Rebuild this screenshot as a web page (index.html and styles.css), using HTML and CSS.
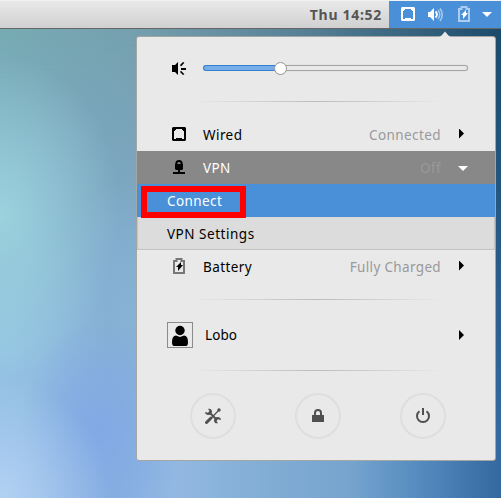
FILE: index.html
```html
<!DOCTYPE html>
<html lang="en">
<head>
<meta charset="utf-8">
<title>System menu</title>
<link rel="stylesheet" href="styles.css">
</head>
<body>
<div class="desktop">
  <header class="topbar">
    <span class="clock">Thu 14:52</span>
    <div class="status">
      <svg class="s-net" width="14" height="14" viewBox="0 0 14 14"><path fill="#fff" fill-rule="evenodd" d="M1 0h12l1 1v12l-1 1H1l-1-1V1zM2 12h10V4h-1V3h-1V2H4v1H3v1H2zM4 11h6v1H4z"/></svg>
      <svg class="s-vol" width="16" height="14" viewBox="0 0 16 14"><path fill="#fff" d="M0 4h2l4-4v13L2 9H0z"/><path d="M7.500 3.500q3 3 0 6" stroke="#fff" stroke-width="1.800" fill="none"/><path d="M10 2q3.500 4.500 0 9M12 .5q4.500 6 0 12.500" stroke="#fff" stroke-opacity=".5" stroke-width="1.600" fill="none"/></svg>
      <svg class="s-bat" width="12" height="16" viewBox="0 0 12 16"><path d="M1 15V3h2.500V1h5v2H11v12z" fill="none" stroke="#fff" stroke-opacity=".55" stroke-width="2"/><path fill="#fff" d="M8 4v3h2l-5 6V9H3z"/></svg>
      <svg class="s-arr" width="10" height="5" viewBox="0 0 10 5"><path fill="#fff" d="M0 0h10L5 5z"/></svg>
    </div>
  </header>
  <main class="menu">
    <svg class="pointer" width="12" height="6" viewBox="0 0 12 6"><path d="M0 6Q2 5.500 6 .5Q10 5.500 12 6z" fill="#e9e9e9"/></svg>
    <div class="volume">
      <svg width="14" height="15" viewBox="0 0 14 15"><path d="M0 4h3l3-3v13l-3-3H0zM9 7h5v2H9zM8 4l3-3 1.400.8L9 5.400zM8 11l3 3 1.400-.8L9 9.800z"/></svg>
      <div class="slider"><div class="fill"></div><div class="knob"></div><div class="rest"></div></div>
    </div>
    <div class="sep"></div>
    <div class="row wired">
      <svg class="icon" width="14" height="14" viewBox="0 0 14 14"><path fill-rule="evenodd" d="M1 0h12l1 1v12l-1 1H1l-1-1V1zM2 12h10V4h-1V3h-1V2H4v1H3v1H2zM4 11h6v1H4z"/></svg>
      <span class="name">Wired</span><span class="state connected">Connected</span><i class="arrow"></i>
    </div>
    <div class="row vpn">
      <svg class="icon" width="14" height="14" viewBox="0 0 14 14"><path fill-rule="evenodd" d="M3 4h.3Q3.300 0 7 0t3.700 4H11v5l-1 1H8v2h5v2H1v-2h5v-2H4L3 9zM5.300 4h3.400Q8.700 2 7 2T5.300 4z"/></svg>
      <span class="name">VPN</span><span class="state off">Off</span><i class="arrow down"></i>
    </div>
    <div class="sub connect"><span>Connect</span><div class="mark"></div></div>
    <div class="sub settings"><span>VPN Settings</span></div>
    <div class="row battery">
      <svg class="icon" width="14" height="16" viewBox="0 0 14 16"><path d="M2 15V3h2.500V1h5v2H12v12z" fill="none" stroke="#777" stroke-width="2"/><path d="M9 4v3h2l-5 6V9H4z"/></svg>
      <span class="name">Battery</span><span class="state charged">Fully Charged</span><i class="arrow"></i>
    </div>
    <div class="sep second"></div>
    <div class="user">
      <div class="avatar"><svg width="24" height="24" viewBox="0 0 24 24"><circle cx="12" cy="7.500" r="4.700"/><path d="M4 19q0-6.500 4-6.500l4 1.500 4-1.500q4 0 4 6.500 0 4-2 4H6q-2 0-2-4"/></svg></div>
      <span class="name">Lobo</span><i class="arrow"></i>
    </div>
    <div class="sep third"></div>
    <div class="actions">
      <div class="round"><svg width="16" height="16" viewBox="0 0 16 16"><path d="M2 14.500 14 2" stroke="#4f4f4f" stroke-width="1.200"/><path d="M1.500 14.500 6 10" stroke="#4f4f4f" stroke-width="3" stroke-linecap="round"/><circle cx="14" cy="2" r="1.700" fill="#4f4f4f"/><path d="M5 5l6 6" stroke="#4f4f4f" stroke-width="2"/><path d="M3 .8q3.500-.8 4 2.700-.3 3.500-3.500 3.500T0 4l3 .8L4.500 3zM13 15.200q-3.500.8-4-2.700.3-3.500 3.500-3.500t3.500 3l-3-.8-1.500 1.800z" fill="#4f4f4f"/></svg></div>
      <div class="round"><svg width="16" height="16" viewBox="0 0 16 16"><path fill="#4f4f4f" fill-rule="evenodd" d="M2 7h2V5q0-4 4-4t4 4v2h2v7H2zM6 7h4V5q0-2-2-2T6 5z"/></svg></div>
      <div class="round"><svg width="16" height="16" viewBox="0 0 16 16"><path d="M4.500 3.200a6 6 0 1 0 7 0" fill="none" stroke="#4f4f4f" stroke-width="2"/><path d="M8 0v7" stroke="#4f4f4f" stroke-width="2"/></svg></div>
    </div>
  </main>
</div>
</body>
</html>
```
FILE: styles.css
```css
* { box-sizing: border-box; }
body { margin: 0; background: #fff; font: 13.5px "Noto Sans", "Open Sans", sans-serif; color: #000; }
svg { display: block; flex: none; }
.desktop {
  position: relative; isolation: isolate;
  width: 501px; height: 498px; overflow: hidden;
  background:
    linear-gradient(to right, #93b9e8 0, #88b0e1 110px, #92b8e2 180px, #84afd6 250px, #76a4ce 350px, #548bbf 420px, #3468a0 501px);
}
.desktop::before, .desktop::after { content: ""; position: absolute; inset: 0; z-index: -1; }
.desktop::before {
  background: linear-gradient(to right, #76abb3 0, #75a0ae 130px, #588196 300px, #1b4b6b 500px);
  mask-image: linear-gradient(to bottom, #000 30px, #0009 200px, transparent 440px);
}
.desktop::after {
  background:
    radial-gradient(ellipse 110px 120px at 0 498px, #b2d2f2, #b2d2f200),
    radial-gradient(ellipse 80px 110px at 100px 430px, #82a9e4, #82a9e400),
    radial-gradient(ellipse 120px 160px at 0 215px, #9bd2dd, #9bd2dd00),
    radial-gradient(ellipse 110px 140px at 0 340px, #98cae5cc, #98cae500),
    radial-gradient(ellipse 90px 130px at 130px 310px, #88b4d6cc, #88b4d600);
}
.topbar {
  height: 29px; display: flex; justify-content: flex-end;
  background: linear-gradient(#e9e9e9, #d0d0d0);
  border-top: 1px solid #f1f1f1; border-bottom: 1px solid #666;
}
.clock { font-size: 14px; font-weight: 700; color: #555; line-height: 28px; margin-right: 7px; letter-spacing: .7px; }
.status { width: 112px; background: #4a90d9; display: flex; padding-left: 12px; }
.s-net { margin-top: 6px; }
.s-vol { margin: 7px 0 0 13px; }
.s-bat { margin: 5px 0 0 14px; }
.s-arr { margin: 11px 0 0 12px; }
.menu {
  position: relative; width: 360px; height: 425px; margin: 7px 0 0 136px;
  border: 1px solid #a5a5a2; border-radius: 3px; background: #e9e9e9;
  letter-spacing: .42px;
}
.pointer { position: absolute; left: 302px; top: -6px; }
.volume { height: 64px; display: flex; align-items: center; padding: 0 27px 2px 35px; }
.slider { display: flex; align-items: center; width: 266px; margin-left: 17px; }
.fill { width: 72px; height: 6px; background: #77aeea; border: 1px solid #3580d1; border-right: 0; border-radius: 3px 0 0 3px; }
.knob { width: 13px; height: 13px; margin: 0 -1px; border: 1px solid #929292; border-radius: 50%; background: #fff; z-index: 1; }
.rest { flex: 1; height: 6px; border: 1px solid #a4a4a4; border-left: 0; border-radius: 0 3px 3px 0; box-shadow: 0 0 1px #bbb; }
.sep { height: 1px; margin: 0 51px 0 55px; background: linear-gradient(to right, transparent, #bcbcbc 50%, transparent); }
.wired { margin-top: 16px; }
.row { height: 33px; display: flex; align-items: center; padding: 0 27px 0 35px; }
.row .icon { margin-bottom: 1px; }
.row .name { margin-left: 17px; }
.state { margin-left: auto; color: #999; }
.charged { letter-spacing: .34px; }
.arrow { width: 5px; height: 10px; margin: 0 4px 2px 18px; background: #000; clip-path: polygon(0 0, 100% 50%, 0 100%); }
.arrow.down { width: 10px; height: 5px; margin: 2px 0 0 17px; background: #fff; clip-path: polygon(0 0, 100% 0, 50% 100%); }
.vpn { background: #888; color: #fff; }
.sub { height: 33px; display: flex; align-items: center; padding-left: 30px; }
.connect { position: relative; background: #4a90d9; color: #fff; }
.mark { position: absolute; left: 4px; top: 2px; width: 105px; height: 32px; border: 6px solid #f00; z-index: 1; }
.settings { background: #dcdcdc; box-shadow: inset 1px -1px 1px #c2c2c2, inset -1px 0 1px #c2c2c2; letter-spacing: .52px; }
.second { margin-top: 16px; }
.user { height: 70px; display: flex; align-items: center; padding: 0 27px 0 30px; }
.avatar { width: 26px; height: 26px; border: 1px solid #8b8b8b; }
.user .name { margin-left: 12px; letter-spacing: .1px; }
.user .arrow { margin: 0 4px 0 auto; }
.actions { display: flex; justify-content: space-between; padding: 22px 49px 0 53px; }
.round { width: 46px; height: 46px; border: 2px solid #dedede; border-radius: 50%; display: grid; place-items: center; }
```
